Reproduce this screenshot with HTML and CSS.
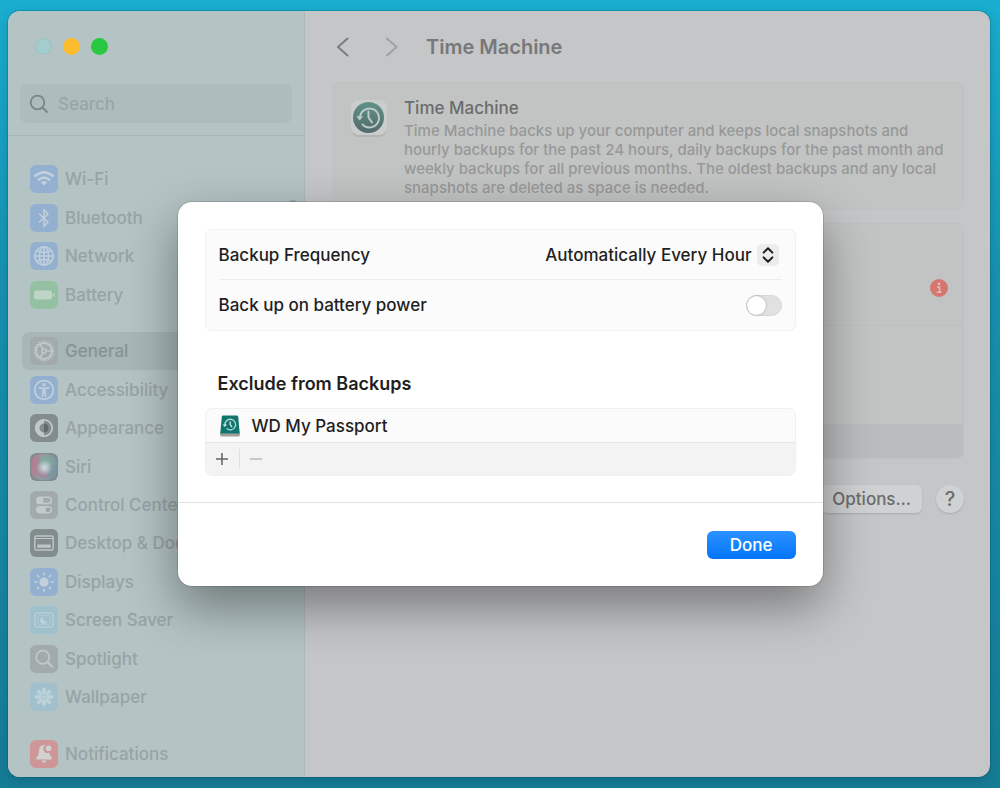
FILE: index.html
```html
<!DOCTYPE html>
<html lang="en">

<head>
    <meta charset="UTF-8">
    <meta name="viewport" content="width=device-width, initial-scale=1.0">
    <title>Time Machine</title>
    <link rel="stylesheet" href="styles.css">
</head>

<body>
    <div class="window">
        <aside class="sidebar">
            <div class="traffic-lights">
                <button class="light close" aria-label="Close"></button>
                <button class="light minimize" aria-label="Minimize"></button>
                <button class="light zoom" aria-label="Zoom"></button>
            </div>

            <label class="search">
                <svg width="20" height="20" viewBox="0 0 20 20" fill="none" stroke="#7a8586" stroke-width="1.8" stroke-linecap="round">
                    <circle cx="8.5" cy="8.5" r="6.8" />
                    <path d="M13.5 13.5 L18 18" />
                </svg>
                <input type="search" placeholder="Search" aria-label="Search">
            </label>

            <nav class="menu">
                <a href="#" class="item">
                    <svg class="icon blue" viewBox="0 0 28 28" fill="none" stroke="#c3d0dc" stroke-width="2.6">
                        <path d="M4.5 11.5 Q14 3.2 23.5 11.5" />
                        <path d="M8 15.3 Q14 10 20 15.3" />
                        <path d="M10.8 17.2 Q14 14.8 17.2 17.2 L14 20.6 Z" fill="#c3d0dc" stroke="none" />
                    </svg>
                    Wi-Fi
                </a>
                <a href="#" class="item">
                    <svg class="icon blue" viewBox="0 0 28 28" fill="none" stroke="#c3d0dc" stroke-width="1.5" stroke-linejoin="round" stroke-linecap="round">
                        <path d="M9.5 10 L18 18 L14 22.5 V5.5 L18 10 L9.5 18" />
                    </svg>
                    Bluetooth
                </a>
                <a href="#" class="item">
                    <svg class="icon blue" viewBox="0 0 28 28" fill="none" stroke="#c3d0dc" stroke-width="1.5">
                        <circle cx="14" cy="14" r="9.2" />
                        <ellipse cx="14" cy="14" rx="4.6" ry="9.2" />
                        <path d="M14 4.8 V23.2 M4.8 14 H23.2 M6.8 8.5 Q14 12.5 21.2 8.5 M6.8 19.5 Q14 15.5 21.2 19.5" />
                    </svg>
                    Network
                </a>
                <a href="#" class="item">
                    <svg class="icon green" viewBox="0 0 28 28">
                        <rect x="4" y="9.5" width="18" height="9" rx="2.5" fill="#c0d5c9" />
                        <rect x="23" y="12.3" width="1.6" height="3.4" rx="0.8" fill="#c0d5c9" />
                    </svg>
                    Battery
                </a>
                <div class="gap"></div>
                <a href="#" class="item selected">
                    <svg class="icon gray" viewBox="0 0 28 28" fill="none" stroke="#c0c8c9" stroke-width="1.6">
                        <circle cx="14" cy="14" r="8" stroke-width="2" />
                        <circle cx="14" cy="14" r="9.7" stroke-dasharray="1.5 1.55" />
                        <circle cx="14" cy="14" r="2" />
                        <path d="M16 14 H22 M13 12.2 L10 7 M13 15.8 L10 21" />
                    </svg>
                    General
                </a>
                <a href="#" class="item">
                    <svg class="icon blue" viewBox="0 0 28 28" fill="none" stroke="#c3d0dc" stroke-width="1.7" stroke-linecap="round">
                        <circle cx="14" cy="14" r="9.3" />
                        <circle cx="14" cy="8.8" r="1.7" fill="#c3d0dc" stroke="none" />
                        <path d="M9.5 11.8 L14 12.6 L18.5 11.8 M14 12.6 V15.5 M13.2 12.8 V15.5 L12.4 20 M14.8 12.8 V15.5 L15.6 20" />
                    </svg>
                    Accessibility
                </a>
                <a href="#" class="item">
                    <svg class="icon dark" viewBox="0 0 28 28">
                        <circle cx="14" cy="14" r="8.2" fill="none" stroke="#c0c9ca" stroke-width="1.8" />
                        <path d="M14 5 A9 9 0 0 0 14 23 V18.5 A4.5 4.5 0 0 1 14 9.5 Z" fill="#c0c9ca" />
                        <path d="M14 9.5 A4.5 4.5 0 0 1 14 18.5 Z" fill="#5f696a" />
                    </svg>
                    Appearance
                </a>
                <a href="#" class="item">
                    <svg class="icon" viewBox="0 0 28 28">
                        <defs>
                            <linearGradient id="siri" x1="0" y1="0.4" x2="1" y2="0.6">
                                <stop offset="0" stop-color="#b9798c" />
                                <stop offset="0.4" stop-color="#949a9f" />
                                <stop offset="1" stop-color="#7895a3" />
                            </linearGradient>
                            <radialGradient id="glow">
                                <stop offset="0" stop-color="#d2dfe2" />
                                <stop offset="1" stop-color="#d2dfe2" stop-opacity="0" />
                            </radialGradient>
                        </defs>
                        <rect width="28" height="28" rx="6" fill="#808b90" />
                        <rect x="1" y="1" width="26" height="26" rx="9" fill="url(#siri)" />
                        <path d="M9 4 Q23 1 25 12 L14 14 Z" fill="#7fa99c" opacity="0.8" />
                        <path d="M3 17 Q8 27 19 24 L14 14 Z" fill="#ab859b" opacity="0.6" />
                        <circle cx="14.5" cy="14.5" r="8" fill="url(#glow)" />
                    </svg>
                    Siri
                </a>
                <a href="#" class="item">
                    <svg class="icon gray" viewBox="0 0 28 28">
                        <rect x="6.7" y="6.2" width="14.6" height="6.4" rx="3.2" fill="none" stroke="#c2caca" stroke-width="1.5" />
                        <circle cx="10" cy="9.4" r="3.4" fill="#c2caca" />
                        <rect x="6" y="15" width="16" height="7.6" rx="3.8" fill="#c2caca" />
                        <circle cx="18" cy="18.8" r="2.4" fill="#9da6a7" />
                    </svg>
                    Control Center
                </a>
                <a href="#" class="item">
                    <svg class="icon dark" viewBox="0 0 28 28">
                        <rect x="4.8" y="7" width="18.4" height="14" rx="1.6" fill="none" stroke="#bdc6c7" stroke-width="1.4" />
                        <path d="M5 9.5 H23" stroke="#bdc6c7" stroke-width="1" />
                        <rect x="7.2" y="15.4" width="13.6" height="3.4" rx="0.6" fill="#bdc6c7" />
                    </svg>
                    Desktop &amp; Dock
                </a>
                <a href="#" class="item">
                    <svg class="icon blue" viewBox="0 0 28 28" stroke="#c3d0dc" stroke-width="1.7" stroke-linecap="round">
                        <circle cx="14" cy="14" r="4.6" fill="#c3d0dc" stroke="none" />
                        <path d="M14 5 V6.6 M14 21.4 V23 M5 14 H6.6 M21.4 14 H23 M7.6 7.6 L8.7 8.7 M19.3 19.3 L20.4 20.4 M7.6 20.4 L8.7 19.3 M19.3 8.7 L20.4 7.6" />
                    </svg>
                    Displays
                </a>
                <a href="#" class="item">
                    <svg class="icon sky" viewBox="0 0 28 28" fill="none" stroke="#b7ced6" stroke-width="1.5">
                        <rect x="5" y="7" width="18" height="14" rx="2.5" />
                        <rect x="8" y="9.5" width="12" height="9" rx="1" stroke-width="0.8" />
                        <path d="M12.5 11 A3.6 3.6 0 1 0 17 15.5 A4 4 0 0 1 12.5 11 Z" fill="#bed2d9" stroke="none" />
                    </svg>
                    Screen Saver
                </a>
                <a href="#" class="item">
                    <svg class="icon gray" viewBox="0 0 28 28" fill="none" stroke="#c0c8c9" stroke-width="1.8" stroke-linecap="round">
                        <circle cx="12.8" cy="12.2" r="6.6" />
                        <path d="M17.7 17.2 L22 21.5" stroke-width="2.2" />
                    </svg>
                    Spotlight
                </a>
                <a href="#" class="item">
                    <svg class="icon sky" viewBox="0 0 28 28" fill="#bed2d9">
                        <g id="petals">
                            <ellipse cx="14" cy="8" rx="1.9" ry="3.6" />
                            <ellipse cx="14" cy="20" rx="1.9" ry="3.6" />
                            <ellipse cx="8" cy="14" rx="3.6" ry="1.9" />
                            <ellipse cx="20" cy="14" rx="3.6" ry="1.9" />
                        </g>
                        <use href="#petals" transform="rotate(45 14 14)" />
                        <circle cx="14" cy="14" r="1.8" />
                    </svg>
                    Wallpaper
                </a>
                <div class="gap"></div>
                <a href="#" class="item">
                    <svg class="icon red" viewBox="0 0 28 28" fill="#d0d2d2">
                        <path d="M14 5 Q9.3 5.4 9 10.5 Q9 15.5 6.3 17.6 V19.4 H21.7 V17.6 Q19.4 15.5 19.2 12.6 A4 4 0 0 1 15.6 5.3 Q14.8 5 14 5 Z" />
                        <path d="M11.6 20.6 H16.4 Q16 22.8 14 22.8 Q12 22.8 11.6 20.6 Z" />
                        <circle cx="18.6" cy="8.2" r="2.8" />
                    </svg>
                    Notifications
                </a>
            </nav>
            <div class="scrollbar"></div>
        </aside>

        <main class="content">
            <header class="toolbar">
                <button class="nav-button" aria-label="Back">
                    <svg width="14" height="20" viewBox="0 0 14 20"><path d="M11.5 1.5 L2 10 L11.5 18.5" /></svg>
                </button>
                <button class="nav-button forward" aria-label="Forward" disabled>
                    <svg width="14" height="20" viewBox="0 0 14 20"><path d="M2 1.5 L11.5 10 L2 18.5" /></svg>
                </button>
                <h1>Time Machine</h1>
            </header>

            <section class="card intro">
                <svg class="app-icon" viewBox="0 0 38 38" fill="none">
                    <defs>
                        <linearGradient id="dial" x1="0" y1="0" x2="0" y2="1">
                            <stop offset="0" stop-color="#609188" />
                            <stop offset="1" stop-color="#526a6a" />
                        </linearGradient>
                    </defs>
                    <rect x="1" y="2" width="36" height="36" rx="8" fill="#b3b5b5" />
                    <rect x="1" y="1" width="36" height="35" rx="8" fill="#cbcdcd" />
                    <circle cx="18.5" cy="18.5" r="15.5" fill="url(#dial)" />
                    <path d="M10 18.5 A9.5 9.5 0 1 1 12 24.8" stroke="#bccbc9" stroke-width="2" />
                    <path d="M6.2 17.3 H13.2 L9.7 21.6 Z" fill="#bccbc9" />
                    <path d="M18.5 12.5 V18.5 L22 23.5" stroke="#bccbc9" stroke-width="2" stroke-linecap="round" />
                </svg>
                <div>
                    <h2>Time Machine</h2>
                    <p>Time Machine backs up your computer and keeps local snapshots and hourly backups for the past 24 hours, daily backups for the past month and weekly backups for all previous months. The oldest backups and any local snapshots are deleted as space is needed.</p>
                </div>
            </section>

            <section class="card disks">
                <div class="disk">
                    <svg width="18" height="18" viewBox="0 0 18 18">
                        <circle cx="9" cy="9" r="9" fill="#d7756f" />
                        <circle cx="9" cy="4.8" r="1.4" fill="#d8c2c1" />
                        <path d="M7 8 H9.6 V13.2 M6.8 13.2 H11.6" stroke="#d8c2c1" stroke-width="1.5" fill="none" />
                    </svg>
                </div>
                <div class="disks-footer"></div>
            </section>

            <div class="actions">
                <button class="options">Options…</button>
                <button class="help" aria-label="Help">?</button>
            </div>
        </main>

        <div class="overlay">
            <div class="sheet" role="dialog" aria-label="Backup options">
                <div class="sheet-body">
                    <div class="group">
                        <div class="row">
                            <label for="frequency">Backup Frequency</label>
                            <span class="picker">
                                <select id="frequency">
                                    <option>Automatically Every Hour</option>
                                </select>
                                <svg width="22" height="22" viewBox="0 0 22 22">
                                    <rect width="22" height="22" rx="5" fill="#ececec" />
                                    <path d="M6.6 8.6 L11 4.2 L15.4 8.6 M6.6 13.4 L11 17.8 L15.4 13.4" fill="none" stroke="#1d1d1d" stroke-width="2" stroke-linecap="round" stroke-linejoin="round" />
                                </svg>
                            </span>
                        </div>
                        <div class="row">
                            <label for="battery">Back up on battery power</label>
                            <input type="checkbox" id="battery" class="switch">
                        </div>
                    </div>

                    <h3>Exclude from Backups</h3>
                    <div class="list">
                        <div class="list-item">
                            <svg width="22" height="22" viewBox="0 0 22 22" fill="none">
                                <path d="M1.2 19 L2.8 1.8 Q3 0.5 4.2 0.5 H17.8 Q19 0.5 19.2 1.8 L20.8 19 Z" fill="#11766f" />
                                <path d="M1.2 18.4 H20.8 V20 Q20.8 21.5 19.4 21.5 H2.6 Q1.2 21.5 1.2 20 Z" fill="#a3a09b" />
                                <path d="M6 10.2 A5.3 5.3 0 1 1 7.6 13.4" stroke="#b5dcd6" stroke-width="1.3" />
                                <path d="M3.6 9.4 H8 L5.8 12 Z" fill="#d3ece8" />
                                <path d="M11.2 6.6 V9.6 L13 12" stroke="#d3ece8" stroke-width="1.3" />
                            </svg>
                            WD My Passport
                        </div>
                        <div class="list-toolbar">
                            <button aria-label="Add">
                                <svg width="14" height="14" viewBox="0 0 14 14"><path d="M7 1 V13 M1 7 H13" stroke="#666" stroke-width="1.6" /></svg>
                            </button>
                            <button aria-label="Remove" disabled>
                                <svg width="14" height="14" viewBox="0 0 14 14"><path d="M1 7 H13" stroke="#bdbdbd" stroke-width="1.6" /></svg>
                            </button>
                        </div>
                    </div>
                </div>
                <div class="sheet-footer">
                    <button class="done">Done</button>
                </div>
            </div>
        </div>
    </div>
</body>

</html>
```

FILE: styles.css
```css
* {
    box-sizing: border-box;
}

body {
    margin: 0;
    min-height: 100vh;
    padding: 11px 10px 11px 8px;
    display: flex;
    font-family: Inter, "Liberation Sans", sans-serif;
    font-size: 17px;
    font-weight: 500;
    line-height: 22px;
    background: linear-gradient(to bottom, #19aed0, #1793b1 35%, #167c96);
}

h1, h2, h3, p {
    margin: 0;
}

button, input, select {
    font: inherit;
    color: inherit;
    border: none;
    padding: 0;
    margin: 0;
    background: none;
}

svg {
    display: block;
    flex: none;
}

.window {
    position: relative;
    flex: 1;
    display: flex;
    border-radius: 12px;
    overflow: hidden;
    background: #c5c6c8;
    box-shadow: 0 0 0 1px rgba(0, 60, 80, 0.2), 0 4px 12px rgba(0, 40, 60, 0.2);
}

/* Sidebar */
.sidebar {
    position: relative;
    width: 297px;
    flex: none;
    display: flex;
    flex-direction: column;
    background: #b4c3c4;
    border-right: 1px solid #adb9bb;
    color: #97a4a6;
}

.traffic-lights {
    display: flex;
    gap: 11px;
    padding: 27px 27px 29px;
}

.light {
    width: 17px;
    height: 17px;
    border-radius: 50%;
}

.close {
    background: #a2cccd;
    border: 1px solid #9fc0c2;
}

.minimize {
    background: #fdbc2e;
}

.zoom {
    background: #28c840;
}

.search {
    display: flex;
    align-items: center;
    gap: 9px;
    height: 39px;
    margin: 0 12px 12px;
    padding: 0 9px;
    border-radius: 7px;
    background: #adbdbe;
}

.search input {
    flex: 1;
    min-width: 0;
    outline: none;
    appearance: none;
}

.search input::placeholder {
    color: #98a6a8;
    opacity: 1;
}

.menu {
    flex: 1;
    display: flex;
    flex-direction: column;
    padding: 24px 14px 4px;
    border-top: 1px solid #a8b7b9;
}

.item {
    flex: 1;
    display: flex;
    align-items: center;
    gap: 7px;
    min-height: 38px;
    padding: 0 8px;
    border-radius: 7px;
    color: inherit;
    text-decoration: none;
    white-space: nowrap;
}

.item.selected {
    background: #a7b6b7;
    color: #869394;
}

.gap {
    height: 18px;
}

.icon {
    width: 28px;
    height: 28px;
    border-radius: 6px;
}

.blue {
    background: #93b0d0;
}

.green {
    background: #93c1a1;
}

.gray {
    background: #a2aaab;
}

.dark {
    background: #838d8e;
}

.sky {
    background: #a0c0cd;
}

.red {
    background: #cf9698;
}

.scrollbar {
    position: absolute;
    top: 189px;
    right: 6px;
    width: 10px;
    height: 300px;
    border-radius: 5px;
    background: #9aa7a8;
}

/* Main pane */
.content {
    flex: 1;
    min-width: 0;
    padding: 0 26px 20px 28px;
    color: #6b6c6d;
}

.toolbar {
    display: flex;
    align-items: center;
    height: 71px;
}

.toolbar h1 {
    font-size: 20px;
    line-height: 24px;
    font-weight: 600;
    color: #77787a;
}

.nav-button {
    width: 20px;
    margin-right: 29px;
}

.nav-button.forward {
    margin-right: 24px;
}

.nav-button svg {
    margin: 0 auto;
    fill: none;
    stroke: #7c7d7e;
    stroke-width: 2;
    stroke-linecap: round;
    stroke-linejoin: round;
}

.forward svg {
    stroke: #a0a1a2;
}

.card {
    border-radius: 7px;
    background: #c2c4c3;
    border: 1px solid #bfc1c1;
}

.intro {
    display: flex;
    gap: 16px;
    padding: 14px 15px 12px 16px;
}

.app-icon {
    width: 38px;
    height: 38px;
    margin-top: 2px;
}

.intro h2 {
    font-size: 17px;
    font-weight: 500;
    line-height: 22px;
    margin-bottom: 2px;
}

.intro p {
    font-size: 15px;
    line-height: 19px;
    color: #979898;
}

.disks {
    margin-top: 13px;
    overflow: hidden;
}

.disk {
    display: flex;
    justify-content: flex-end;
    padding: 55px 15px 28px;
    border-bottom: 1px solid #bdbfbf;
}

.disks-footer {
    height: 132px;
    border-bottom: 34px solid #babcbe;
}

.actions {
    display: flex;
    justify-content: flex-end;
    gap: 14px;
    margin-top: 26px;
}

.options {
    height: 28px;
    padding: 0 11px;
    border-radius: 6px;
    background: #d0d1d2;
    box-shadow: 0 1px 2px rgba(0, 0, 0, 0.15);
}

.help {
    width: 28px;
    height: 28px;
    border-radius: 50%;
    background: #d0d1d2;
    font-size: 20px;
    box-shadow: 0 1px 2px rgba(0, 0, 0, 0.15);
}

/* Options sheet */
.overlay {
    position: absolute;
    inset: 0;
    display: grid;
    place-items: center;
    padding-left: 2px;
}

.sheet {
    width: 645px;
    max-width: 100%;
    border-radius: 14px;
    background: #fff;
    color: #1f1f1f;
    box-shadow: 0 0 0 1px rgba(0, 0, 0, 0.12), 0 20px 50px rgba(0, 0, 0, 0.4);
}

.sheet-body {
    padding: 27px 27px 26px;
}

.group, .list {
    border: 1px solid #f0f0f0;
    border-radius: 7px;
    background: #fbfbfb;
}

.row {
    display: flex;
    align-items: center;
    justify-content: space-between;
    height: 51px;
    margin: 0 13px;
}

.row:first-child {
    height: 49px;
}

.row + .row {
    border-top: 1px solid #ececec;
}

.picker {
    display: flex;
    align-items: center;
    gap: 5px;
    padding-right: 3px;
}

.picker select {
    appearance: none;
    text-align-last: right;
}

.switch {
    appearance: none;
    width: 36px;
    height: 21px;
    border-radius: 11px;
    background: #e1e1e1;
    border: 1px solid #d6d6d6;
}

.switch::before {
    content: "";
    display: block;
    width: 19px;
    height: 19px;
    border-radius: 50%;
    background: #fff;
    box-shadow: 0 0 2px rgba(0, 0, 0, 0.35);
}

.switch:checked {
    background: #0a7aff;
}

.switch:checked::before {
    margin-left: auto;
}

.sheet h3 {
    margin: 42px 13px 13px;
    font-size: 18px;
    line-height: 22px;
    font-weight: 600;
}

.list {
    overflow: hidden;
}

.list-item {
    display: flex;
    align-items: center;
    gap: 11px;
    height: 33px;
    padding: 0 13px;
}

.list-toolbar {
    display: flex;
    align-items: center;
    height: 33px;
    background: #f3f3f3;
    border-top: 1px solid #e6e6e6;
}

.list-toolbar button {
    display: grid;
    place-items: center;
    width: 33px;
    height: 20px;
}

.list-toolbar button + button {
    border-left: 1px solid #e0e0e0;
}

.sheet-footer {
    display: flex;
    justify-content: flex-end;
    padding: 28px 27px 27px;
    border-top: 1px solid #e3e3e3;
}

.done {
    width: 89px;
    height: 28px;
    border-radius: 6px;
    background: linear-gradient(to bottom, #2b92ff, #0375fb);
    color: #fff;
}
```
